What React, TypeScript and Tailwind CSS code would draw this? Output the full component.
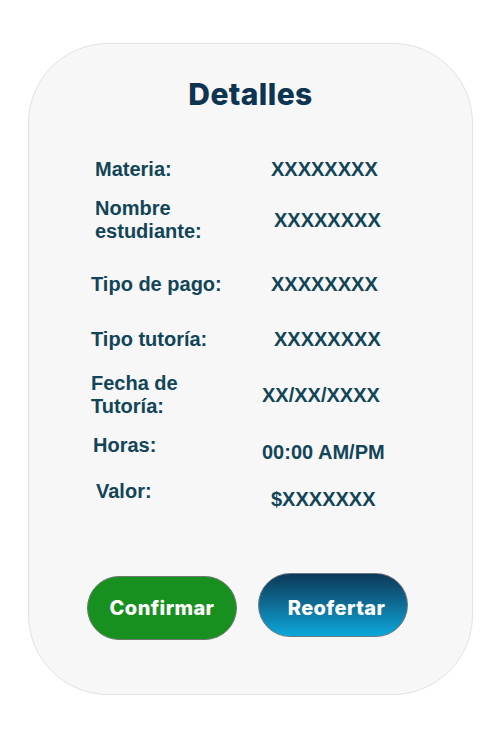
import React from "react";

type Row = {
  label: string[];
  value: string;
  mt: string;
  lpl: string;
  lmt: string;
  vpl: string;
  vmt: string;
};

const rows: Row[] = [
  { label: ["Materia:"], value: "XXXXXXXX", mt: "mt-0", lpl: "pl-[66px]", lmt: "mt-0", vpl: "pl-[9px]", vmt: "mt-0" },
  { label: ["Nombre", "estudiante:"], value: "XXXXXXXX", mt: "mt-[16px]", lpl: "pl-[66px]", lmt: "mt-0", vpl: "pl-[12px]", vmt: "mt-[12px]" },
  { label: ["Tipo de pago:"], value: "XXXXXXXX", mt: "mt-[30px]", lpl: "pl-[62px]", lmt: "mt-0", vpl: "pl-[9px]", vmt: "mt-0" },
  { label: ["Tipo tutoría:"], value: "XXXXXXXX", mt: "mt-[32px]", lpl: "pl-[62px]", lmt: "mt-0", vpl: "pl-[12px]", vmt: "mt-0" },
  { label: ["Fecha de", "Tutoría:"], value: "XX/XX/XXXX", mt: "mt-[21px]", lpl: "pl-[62px]", lmt: "mt-0", vpl: "pl-0", vmt: "mt-[12px]" },
  { label: ["Horas:"], value: "00:00 AM/PM", mt: "mt-[16px]", lpl: "pl-[64px]", lmt: "mt-0", vpl: "pl-0", vmt: "mt-[7px]" },
  { label: ["Valor:"], value: "$XXXXXXX", mt: "mt-[16px]", lpl: "pl-[67px]", lmt: "mt-0", vpl: "pl-[9px]", vmt: "mt-[8px]" },
];

export default function App() {
  return (
    <div className="w-[490px] h-[747px] bg-white overflow-hidden pt-[43px] pl-[28px]">
      <div className="w-[445px] h-[652px] bg-[#f7f7f7] border border-[#e2e2e2] rounded-[80px] flex flex-col">
        <h1
          className="text-center text-[30px] leading-[36px] font-extrabold tracking-[0.4px] text-[#0d3451] mt-[32px]"
          style={{ fontFamily: "Inter, 'Noto Sans', sans-serif" }}
        >
          Detalles
        </h1>
        <div
          className="flex flex-col mt-[46px] text-[20px] leading-[23px] font-bold text-[#124558]"
          style={{ fontFamily: "'Liberation Sans', Arial, sans-serif" }}
        >
          {rows.map((r, i) => (
            <div key={i} className={`flex items-start ${r.mt}`}>
              <div className={`w-[233px] ${r.lpl} ${r.lmt}`}>
                {r.label.map((l, j) => (
                  <div key={j}>{l}</div>
                ))}
              </div>
              <div className={`${r.vpl} ${r.vmt} whitespace-nowrap`}>{r.value}</div>
            </div>
          ))}
        </div>
        <div
          className="flex items-start mt-[62px] pl-[58px] gap-[21px]"
          style={{ fontFamily: "Inter, 'Noto Sans', sans-serif" }}
        >
          <button className="mt-[3px] w-[150px] h-[64px] rounded-full bg-[#17901f] border border-[#6f7a6f] text-white text-[20px] font-extrabold tracking-[0.4px]">
            Confirmar
          </button>
          <button className="w-[150px] h-[64px] rounded-full bg-gradient-to-b from-[#0b3959] to-[#0aa8da] border border-[#6c7680] text-white text-[20px] font-extrabold tracking-[0.4px] pl-[7px] pt-[5px]">
            Reofertar
          </button>
        </div>
      </div>
    </div>
  );
}
